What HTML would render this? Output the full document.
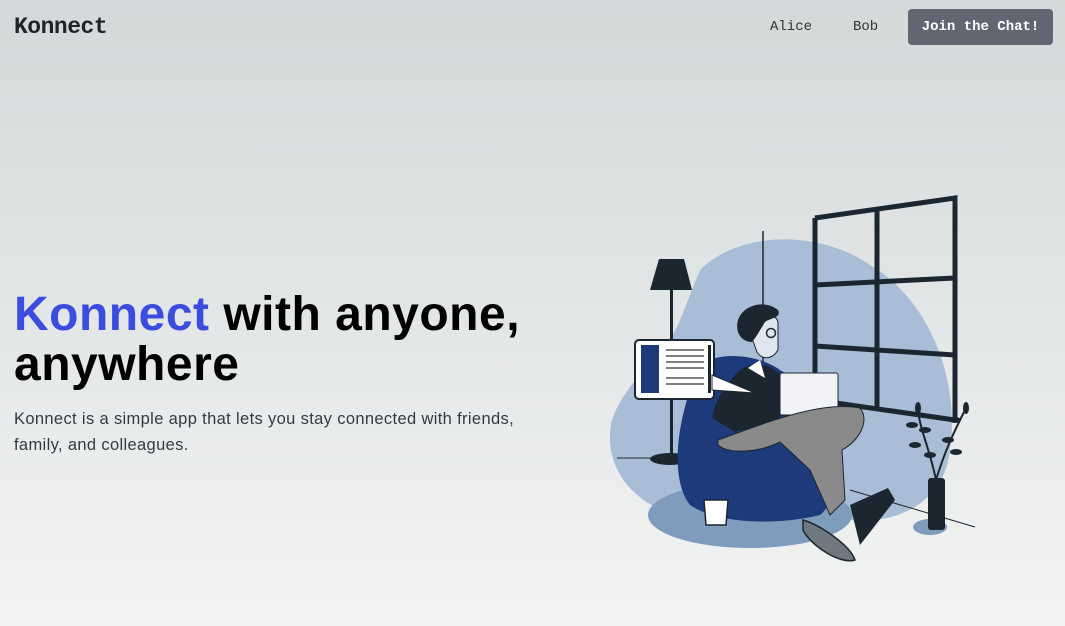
<!DOCTYPE html>
<html><head><style>
*{margin:0;padding:0;box-sizing:border-box}
body{width:1065px;height:626px;overflow:hidden;background:linear-gradient(#d3d8d9,#f3f4f4);font-family:"Liberation Sans",sans-serif;position:relative}
.logo{position:absolute;left:14px;top:14px;font-family:"Liberation Mono",monospace;font-weight:bold;font-size:23px;color:#1f2328;letter-spacing:-0.5px}
.nav{position:absolute;top:19px;font-family:"Liberation Mono",monospace;font-size:14px;color:#333}
.btn{position:absolute;left:908px;top:9px;width:145px;height:36px;background:#636672;border-radius:4px;color:#fff;font-family:"Liberation Mono",monospace;font-weight:bold;font-size:14px;line-height:36px;text-align:center}
h1{position:absolute;left:14px;top:290px;font-size:48px;line-height:50px;font-weight:bold;color:#000;letter-spacing:0.5px}
h1 span{color:#3b4ce0}
p{position:absolute;left:14px;top:406px;width:505px;font-size:16.5px;line-height:26px;color:#333a44;letter-spacing:0.35px}
svg{position:absolute;left:0;top:0}
</style></head><body>
<div class="logo">Konnect</div>
<div class="nav" style="left:770px">Alice</div>
<div class="nav" style="left:853px">Bob</div>
<div class="btn">Join the Chat!</div>
<h1><span>Konnect</span> with anyone,<br>anywhere</h1>
<p>Konnect is a simple app that lets you stay connected with friends,<br>family, and colleagues.</p>
<svg width="1065" height="626">
<path d="M700 270 C740 230 820 230 870 265 C930 300 960 380 950 450 C945 500 900 525 850 520 L700 520 C640 515 600 470 612 420 C625 380 670 350 680 320 Z" fill="#a9bdd6"/>
<ellipse cx="750" cy="515" rx="102" ry="33" fill="#7f9cbd"/>
<g stroke="#1c2630" stroke-width="5" fill="none">
<path d="M815 218 L955 198 L955 420"/><path d="M815 218 L815 400"/><path d="M877 210 L877 410"/>
<path d="M815 285 L955 278"/><path d="M815 346 L955 355"/><path d="M815 400 L955 420"/>
</g>
<line x1="763" y1="231" x2="763" y2="400" stroke="#1c2630" stroke-width="1.5"/>
<line x1="617" y1="458" x2="690" y2="458" stroke="#1c2630" stroke-width="1"/>
<line x1="850" y1="490" x2="975" y2="527" stroke="#1c2630" stroke-width="1"/>
<path d="M659 259 L684 259 L692 290 L650 290 Z" fill="#1c2630"/>
<rect x="670" y="290" width="3" height="170" fill="#1c2630"/>
<ellipse cx="670" cy="459" rx="20" ry="6" fill="#1c2630"/>
<path d="M700 365 C720 350 760 355 780 370 L830 400 C845 440 840 500 820 515 C780 525 720 525 690 505 C670 480 675 420 700 365 Z" fill="#1d3a7a"/>
<path d="M704 500 L728 500 L726 525 L706 525 Z" fill="#fff" stroke="#1c2630" stroke-width="1.5"/>
<path d="M740 370 C755 360 775 365 782 378 L780 420 L735 432 L712 418 C715 400 725 385 740 370 Z" fill="#1c2630"/>
<path d="M748 368 L760 360 L765 378 Z" fill="#fff"/>
<rect x="780" y="373" width="58" height="42" rx="2" fill="#f1f3f6" stroke="#1c2630" stroke-width="1"/>
<path d="M752 320 C758 310 775 312 778 322 L778 350 C772 360 762 360 757 352 L752 338 Z" fill="#dfe6f2" stroke="#1c2630" stroke-width="1"/>
<path d="M738 332 C732 310 760 296 778 310 C782 318 770 318 765 322 C760 330 757 336 752 342 C745 342 740 338 738 332 Z" fill="#1c2630"/>
<circle cx="771" cy="333" r="4.5" fill="none" stroke="#1c2630" stroke-width="1.5"/>
<path d="M718 440 C760 425 820 400 860 408 C870 420 860 440 842 450 L845 500 L830 515 L810 470 L780 442 C760 452 730 455 718 445 Z" fill="#8a8a8a" stroke="#1c2630" stroke-width="1"/>
<path d="M850 505 L888 488 L895 500 L860 545 Z" fill="#1c2630"/>
<path d="M803 520 C820 525 850 545 855 560 C840 565 810 545 803 530 Z" fill="#6f7880" stroke="#1c2630" stroke-width="1.5"/>
<rect x="635" y="340" width="79" height="59" rx="4" fill="#fff" stroke="#1c2630" stroke-width="2"/>
<rect x="641" y="345" width="18" height="48" fill="#1d3a7a"/>
<rect x="708" y="345" width="3" height="48" fill="#1c2630"/>
<g stroke="#555" stroke-width="1.5"><line x1="666" y1="350" x2="704" y2="350"/><line x1="666" y1="356" x2="704" y2="356"/><line x1="666" y1="362" x2="704" y2="362"/><line x1="666" y1="368" x2="704" y2="368"/><line x1="666" y1="378" x2="704" y2="378"/><line x1="666" y1="384" x2="704" y2="384"/></g>
<path d="M712 375 L755 393 L712 390 Z" fill="#fff" stroke="#1c2630" stroke-width="1"/>
<ellipse cx="930" cy="527" rx="17" ry="8" fill="#7f9cbd"/>
<rect x="928" y="478" width="17" height="52" rx="3" fill="#1c2630"/>
<path d="M936 480 C930 450 920 430 918 410 M936 480 C945 450 955 430 965 410" stroke="#1c2630" stroke-width="2" fill="none"/>
<g fill="#1c2630"><ellipse cx="918" cy="408" rx="3" ry="6"/><ellipse cx="912" cy="425" rx="6" ry="3"/><ellipse cx="925" cy="430" rx="6" ry="3"/><ellipse cx="915" cy="445" rx="6" ry="3"/><ellipse cx="930" cy="455" rx="6" ry="3"/><ellipse cx="966" cy="408" rx="3" ry="6"/><ellipse cx="955" cy="420" rx="6" ry="3"/><ellipse cx="948" cy="440" rx="6" ry="3"/><ellipse cx="956" cy="452" rx="6" ry="3"/></g>
</svg>
</body></html>
